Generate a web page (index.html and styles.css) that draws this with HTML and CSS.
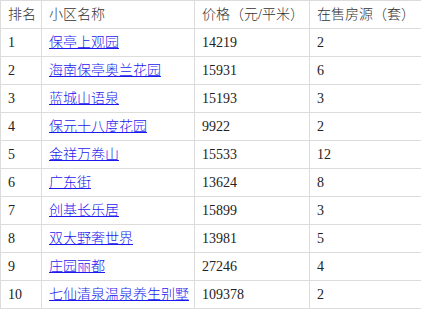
FILE: index.html
```html
<!DOCTYPE html>
<html lang="zh-CN">
<head>
<meta charset="utf-8">
<title>小区价格排名</title>
<link rel="stylesheet" href="styles.css">
</head>
<body>
<table class="rank-table">
  <colgroup>
    <col class="c-rank">
    <col class="c-name">
    <col class="c-price">
    <col class="c-count">
  </colgroup>
  <thead>
    <tr><th>排名</th><th>小区名称</th><th>价格（元/平米）</th><th>在售房源（套）</th></tr>
  </thead>
  <tbody>
    <tr><td>1</td><td><a href="#">保亭上观园</a></td><td>14219</td><td>2</td></tr>
    <tr><td>2</td><td><a href="#">海南保亭奥兰花园</a></td><td>15931</td><td>6</td></tr>
    <tr><td>3</td><td><a href="#">蓝城山语泉</a></td><td>15193</td><td>3</td></tr>
    <tr><td>4</td><td><a href="#">保元十八度花园</a></td><td>9922</td><td>2</td></tr>
    <tr><td>5</td><td><a href="#">金祥万卷山</a></td><td>15533</td><td>12</td></tr>
    <tr><td>6</td><td><a href="#">广东街</a></td><td>13624</td><td>8</td></tr>
    <tr><td>7</td><td><a href="#">创基长乐居</a></td><td>15899</td><td>3</td></tr>
    <tr><td>8</td><td><a href="#">双大野奢世界</a></td><td>13981</td><td>5</td></tr>
    <tr><td>9</td><td><a href="#">庄园丽都</a></td><td>27246</td><td>4</td></tr>
    <tr><td>10</td><td><a href="#">七仙清泉温泉养生别墅</a></td><td>109378</td><td>2</td></tr>
  </tbody>
</table>
</body>
</html>
```

FILE: styles.css
```css
html, body {
  margin: 0;
  padding: 0;
  background: #fff;
}

.rank-table {
  border-collapse: collapse;
  table-layout: fixed;
  width: 421px;
  font-family: "Liberation Serif", "Noto Sans CJK SC", serif;
  font-size: 14px;
  font-weight: 300;
  color: #222;
}

.c-rank { width: 41px; }
.c-name { width: 153px; }
.c-price { width: 115px; }
.c-count { width: 112px; }

.rank-table th,
.rank-table td {
  border: 1px solid #dcdcdc;
  padding: 4px 6px 4px 7px;
  line-height: 19px;
  height: 19px;
  text-align: left;
  font-weight: 300;
  white-space: nowrap;
  vertical-align: middle;
}

.rank-table th {
  color: #333;
}

.rank-table a {
  color: #1a1aee;
  text-decoration: underline;
}
```
